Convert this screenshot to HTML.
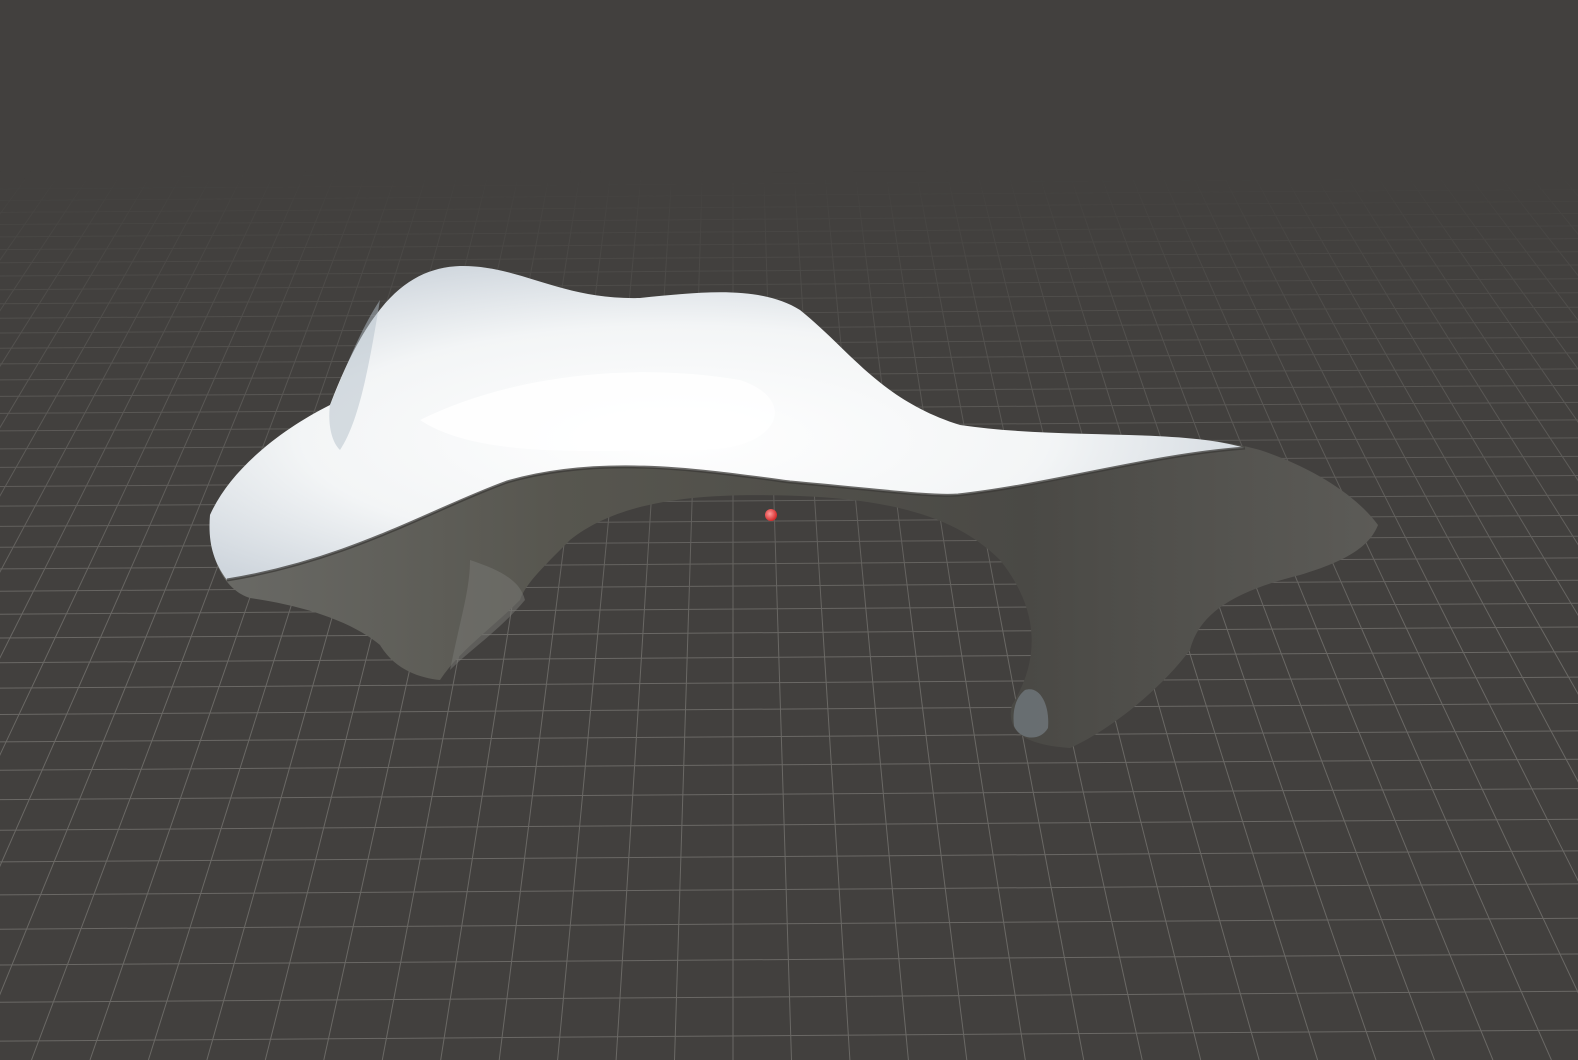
<!DOCTYPE html>
<html><head><meta charset="utf-8">
<style>
html,body{margin:0;padding:0;background:#42403e;width:1578px;height:1060px;overflow:hidden;position:relative}
svg{display:block;position:absolute;left:0;top:0}
</style></head>
<body>
<svg id="s" width="1578" height="1060" viewBox="0 0 1578 1060" xmlns="http://www.w3.org/2000/svg">
<defs>
<linearGradient id="fade" x1="0" y1="0" x2="0" y2="1">
<stop offset="0" stop-color="#fff" stop-opacity="0"/>
<stop offset="0.16" stop-color="#fff" stop-opacity="0"/>
<stop offset="0.38" stop-color="#fff" stop-opacity="0.6"/>
<stop offset="0.6" stop-color="#fff" stop-opacity="1"/>
<stop offset="1" stop-color="#fff" stop-opacity="1"/>
</linearGradient>
<mask id="m"><rect width="1578" height="1060" fill="url(#fade)"/></mask>
<linearGradient id="dark" x1="0" y1="0" x2="1" y2="0">
<stop offset="0" stop-color="#6a6a66"/>
<stop offset="0.3" stop-color="#57564f"/>
<stop offset="0.7" stop-color="#4a4945"/>
<stop offset="1" stop-color="#5c5b57"/>
</linearGradient>
<radialGradient id="white" cx="0.45" cy="0.55" r="0.6">
<stop offset="0" stop-color="#ffffff"/>
<stop offset="0.6" stop-color="#f3f5f6"/>
<stop offset="1" stop-color="#cfd6dd"/>
</radialGradient>
<radialGradient id="red" cx="0.4" cy="0.4" r="0.6">
<stop offset="0" stop-color="#ff9a9a"/>
<stop offset="1" stop-color="#d42a2a"/>
</radialGradient>
</defs>
<g id="grid" mask="url(#m)" stroke="#6a6865" stroke-width="1" fill="none"></g>
<path fill="url(#dark)" d="M210,515 C230,470 280,430 330,405 C370,300 410,268 460,266 C520,265 560,300 640,298 C700,292 760,285 800,310 C850,350 880,400 960,425 C1060,440 1180,428 1260,450 C1320,470 1360,500 1378,525 C1370,545 1350,560 1300,575 C1240,590 1200,610 1190,650 C1160,690 1110,730 1070,748 C1030,745 1005,735 1012,705 C1040,660 1040,610 1000,560 C960,520 900,500 800,496 C700,492 620,500 570,540 C540,570 525,585 520,600 C490,630 460,650 440,680 C420,678 395,670 380,645 C350,620 300,605 250,598 C225,590 208,560 210,515 Z"/>
<path fill="#7a7a76" opacity="0.5" d="M470,560 C500,570 520,580 525,600 C500,630 470,650 450,670 C460,620 470,590 470,560Z"/>
<path fill="#8f9ba6" opacity="0.45" d="M1025,690 C1040,685 1050,705 1048,728 C1040,742 1020,740 1014,726 C1012,710 1016,697 1025,690Z"/>
<path fill="url(#white)" d="M210,515 C230,470 280,430 330,405 C370,300 410,268 460,266 C520,265 560,300 640,298 C700,292 760,285 800,310 C850,350 880,400 960,425 C1060,440 1180,428 1245,448 C1150,455 1050,485 958,495 C930,497 880,490 790,482 C700,470 600,455 507,482 C430,510 350,560 227,580 C212,560 208,540 210,515 Z"/>
<path fill="#ffffff" opacity="0.8" d="M420,420 C500,380 620,360 740,380 C800,400 780,450 700,450 C600,450 480,460 420,420Z"/>
<path fill="#b3bfca" opacity="0.5" d="M330,405 C345,370 360,330 380,300 C370,360 360,420 340,450 C330,440 328,420 330,405Z"/>
<path fill="none" stroke="#3b3a37" stroke-width="3" opacity="0.75" d="M227,580 C350,560 430,510 507,482 C600,455 700,470 790,482 C880,490 930,497 958,495 C1050,485 1150,455 1245,448"/>
<circle cx="771" cy="515" r="6" fill="url(#red)"/>
</svg>
<script>
(function(){
var g=document.getElementById('grid');
var vx=733,vy=-800,F=85069,out='';
for(var k=-8;k<=40;k++){var z=50.28+k;var y=vy+F/z;if(y<150||y>1070)continue;
out+='<line x1="0" y1="'+(y+3).toFixed(1)+'" x2="1578" y2="'+(y-8).toFixed(1)+'"/>';}
var ytop=150;
for(var X=-60;X<=60;X++){var x0=vx+X*55*(1060-vy)/1750,x1=vx+X*55*(ytop-vy)/1750;
out+='<line x1="'+x0.toFixed(1)+'" y1="1060" x2="'+x1.toFixed(1)+'" y2="'+ytop+'"/>';}
g.innerHTML=out;
})();
</script>
</body></html>
